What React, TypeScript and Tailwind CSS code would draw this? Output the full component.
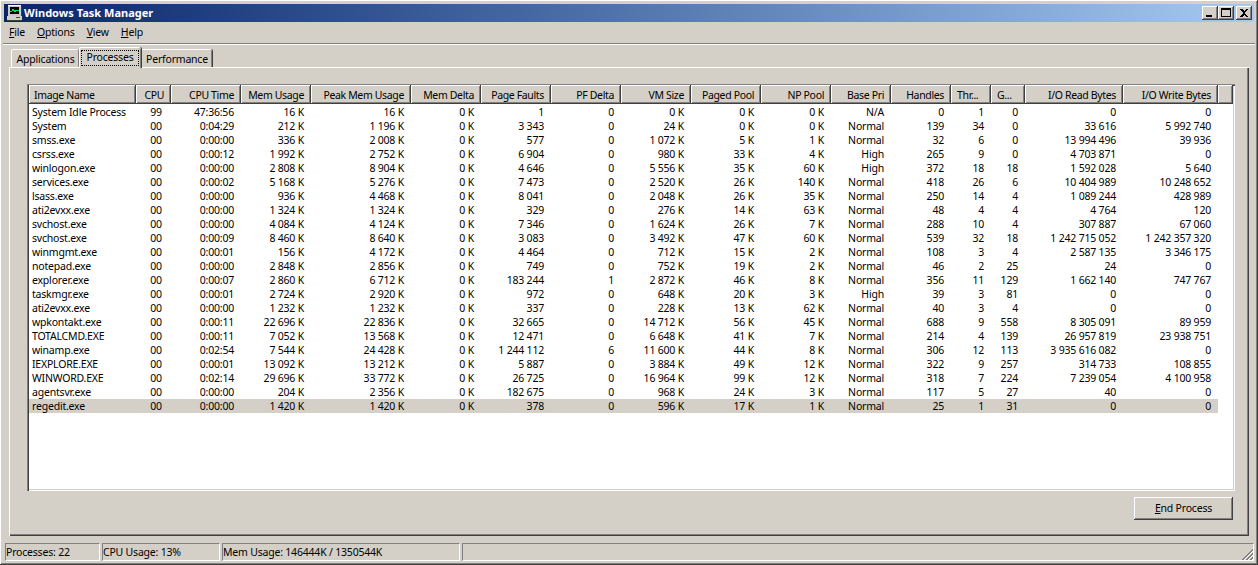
import React from "react";

const raw = `System Idle Process|99|47:36:56|16 K|16 K|0 K|1|0|0 K|0 K|0 K|N/A|0|1|0|0|0
System|00|0:04:29|212 K|1 196 K|0 K|3 343|0|24 K|0 K|0 K|Normal|139|34|0|33 616|5 992 740
smss.exe|00|0:00:00|336 K|2 008 K|0 K|577|0|1 072 K|5 K|1 K|Normal|32|6|0|13 994 496|39 936
csrss.exe|00|0:00:12|1 992 K|2 752 K|0 K|6 904|0|980 K|33 K|4 K|High|265|9|0|4 703 871|0
winlogon.exe|00|0:00:00|2 808 K|8 904 K|0 K|4 646|0|5 556 K|35 K|60 K|High|372|18|18|1 592 028|5 640
services.exe|00|0:00:02|5 168 K|5 276 K|0 K|7 473|0|2 520 K|26 K|140 K|Normal|418|26|6|10 404 989|10 248 652
lsass.exe|00|0:00:00|936 K|4 468 K|0 K|8 041|0|2 048 K|26 K|35 K|Normal|250|14|4|1 089 244|428 989
ati2evxx.exe|00|0:00:00|1 324 K|1 324 K|0 K|329|0|276 K|14 K|63 K|Normal|48|4|4|4 764|120
svchost.exe|00|0:00:00|4 084 K|4 124 K|0 K|7 346|0|1 624 K|26 K|7 K|Normal|288|10|4|307 887|67 060
svchost.exe|00|0:00:09|8 460 K|8 640 K|0 K|3 083|0|3 492 K|47 K|60 K|Normal|539|32|18|1 242 715 052|1 242 357 320
winmgmt.exe|00|0:00:01|156 K|4 172 K|0 K|4 464|0|712 K|15 K|2 K|Normal|108|3|4|2 587 135|3 346 175
notepad.exe|00|0:00:00|2 848 K|2 856 K|0 K|749|0|752 K|19 K|2 K|Normal|46|2|25|24|0
explorer.exe|00|0:00:07|2 860 K|6 712 K|0 K|183 244|1|2 872 K|46 K|8 K|Normal|356|11|129|1 662 140|747 767
taskmgr.exe|00|0:00:01|2 724 K|2 920 K|0 K|972|0|648 K|20 K|3 K|High|39|3|81|0|0
ati2evxx.exe|00|0:00:00|1 232 K|1 232 K|0 K|337|0|228 K|13 K|62 K|Normal|40|3|4|0|0
wpkontakt.exe|00|0:00:11|22 696 K|22 836 K|0 K|32 665|0|14 712 K|56 K|45 K|Normal|688|9|558|8 305 091|89 959
TOTALCMD.EXE|00|0:00:11|7 052 K|13 568 K|0 K|12 471|0|6 648 K|41 K|7 K|Normal|214|4|139|26 957 819|23 938 751
winamp.exe|00|0:02:54|7 544 K|24 428 K|0 K|1 244 112|6|11 600 K|44 K|8 K|Normal|306|12|113|3 935 616 082|0
IEXPLORE.EXE|00|0:00:01|13 092 K|13 212 K|0 K|5 887|0|3 884 K|49 K|12 K|Normal|322|9|257|314 733|108 855
WINWORD.EXE|00|0:02:14|29 696 K|33 772 K|0 K|26 725|0|16 964 K|99 K|12 K|Normal|318|7|224|7 239 054|4 100 958
agentsvr.exe|00|0:00:00|204 K|2 356 K|0 K|182 675|0|968 K|24 K|3 K|Normal|117|5|27|40|0
regedit.exe|00|0:00:00|1 420 K|1 420 K|0 K|378|0|596 K|17 K|1 K|Normal|25|1|31|0|0`;

const rows = raw.split("\n").map((l) => l.split("|"));

const cols: [string, number][] = [
  ["Image Name", 107],
  ["CPU", 35],
  ["CPU Time", 70],
  ["Mem Usage", 70],
  ["Peak Mem Usage", 100],
  ["Mem Delta", 70],
  ["Page Faults", 70],
  ["PF Delta", 70],
  ["VM Size", 70],
  ["Paged Pool", 70],
  ["NP Pool", 70],
  ["Base Pri", 60],
  ["Handles", 60],
  ["Thr...", 40],
  ["G...", 34],
  ["I/O Read Bytes", 98],
  ["I/O Write Bytes", 95],
];

const raised =
  "shadow-[inset_-1px_-1px_0_#404040,inset_1px_1px_0_#ffffff,inset_-2px_-2px_0_#808080]";

function Underlined({ c, rest }: { c: string; rest: string }) {
  return (
    <span>
      <span className="underline">{c}</span>
      {rest}
    </span>
  );
}

function CaptionButton({ children, className }: { children: React.ReactNode; className?: string }) {
  return (
    <div className={`flex h-[14px] w-[16px] items-center justify-center bg-[#d4d0c8] ${raised} ${className ?? ""}`}>
      <svg width="16" height="14" viewBox="0 0 16 14" shapeRendering="crispEdges">
        {children}
      </svg>
    </div>
  );
}

function Tab({ label, active, width }: { label: string; active?: boolean; width: string }) {
  if (active) {
    return (
      <div className={`relative z-10 -mb-px flex h-[21px] items-start rounded-t-[2px] border-t border-l border-white bg-[#d4d0c8] shadow-[inset_-1px_0_0_#808080,1px_0_0_#404040] pt-[2px] pl-[1px] ${width}`}>
        <div className="flex h-[16px] w-[58px] items-center justify-center border border-dotted border-black pb-[2px] leading-none">
          {label}
        </div>
      </div>
    );
  }
  return (
    <div className={`mt-[2px] flex h-[18px] items-center justify-center rounded-t-[2px] border-t border-l border-white bg-[#d4d0c8] pt-[1px] leading-none shadow-[inset_-1px_0_0_#808080,1px_0_0_#404040] ${width}`}>
      {label}
    </div>
  );
}

export default function App() {
  return (
    <div className="flex h-[565px] w-[1258px] flex-col overflow-hidden bg-[#d4d0c8] p-[4px] font-['DejaVu_Sans','Liberation_Sans',sans-serif] text-[10.5px] tracking-[-0.2px] text-black shadow-[inset_-1px_-1px_0_#404040,inset_1px_1px_0_#ffffff,inset_-2px_-2px_0_#808080]">
      {/* title bar */}
      <div className="flex h-[18px] shrink-0 items-center bg-gradient-to-r from-[#0a246a] to-[#a6caf0] pr-[2px] pl-[3px]">
        <svg width="16" height="16" viewBox="0 0 16 16" shapeRendering="crispEdges" className="shrink-0">
          <rect x="1" y="0" width="13" height="11" fill="#c8c8c8" />
          <rect x="1" y="0" width="13" height="1" fill="#fff" />
          <rect x="3" y="2" width="9" height="7" fill="#000" />
          <path d="M3 6h2l1-2 2 3 1-2h3" stroke="#00e060" fill="none" />
          <rect x="0" y="11" width="15" height="4" fill="#d4d0c8" />
          <rect x="0" y="15" width="15" height="1" fill="#404040" />
          <rect x="14" y="1" width="1" height="10" fill="#404040" />
          <rect x="9" y="12" width="4" height="1" fill="#404040" />
        </svg>
        <span className="ml-px text-[11px] font-bold tracking-[0.02px] text-white">Windows Task Manager</span>
        <div className="ml-auto flex items-center">
          <CaptionButton>
            <rect x="4" y="9" width="6" height="2" fill="#000" />
          </CaptionButton>
          <CaptionButton className="mr-[2px]">
            <path d="M3.5 3.5h9v7h-9z M3 2.5h10" stroke="#000" fill="none" />
            <rect x="3" y="2" width="10" height="2" fill="#000" />
          </CaptionButton>
          <CaptionButton>
            <path d="M4 3l2 0 2 2 2-2 2 0-3 4 3 4-2 0-2-2-2 2-2 0 3-4z" fill="#000" />
          </CaptionButton>
        </div>
      </div>

      {/* menu */}
      <div className="flex h-[21px] shrink-0 items-center gap-[12px] pl-[5px]">
        <Underlined c="F" rest="ile" />
        <Underlined c="O" rest="ptions" />
        <Underlined c="V" rest="iew" />
        <Underlined c="H" rest="elp" />
      </div>
      <div className="-mx-px h-[2px] shrink-0 border-t border-b border-t-[#808080] border-b-white" />

      {/* tabs */}
      <div className="mt-[2px] flex shrink-0 pl-[7px]">
        <Tab label="Applications" width="w-[68px]" />
        <Tab label="Processes" active width="w-[62px]" />
        <Tab label="Performance" width="w-[71px]" />
      </div>

      {/* panel */}
      <div className="ml-[5px] mr-[5px] flex h-[469px] shrink-0 flex-col border-t border-l border-white pt-[16px] pr-[14px] pl-[17px] shadow-[inset_-1px_-1px_0_#404040,inset_-2px_-2px_0_#808080]">
        <div className="flex h-[407px] flex-col overflow-hidden bg-white pt-px pl-[1px] shadow-[inset_1px_1px_0_#808080,inset_2px_2px_0_#404040,inset_-1px_-1px_0_#ffffff,inset_-2px_-2px_0_#d4d0c8]">
          <div className="ml-[1px] mr-[2px] flex h-[19px] shrink-0 bg-[#d4d0c8] leading-none tracking-[-0.35px]">
            {cols.map(([name, w], i) => (
              <div
                key={name}
                style={{ width: w }}
                className={`flex h-[19px] shrink-0 items-center pt-[1px] pr-[7px] ${raised} ${
                  i === 0 ? "justify-start pl-[5px]" : i === 13 || i === 14 ? "justify-start pl-[6px]" : "justify-end"
                }`}
              >
                {name}
              </div>
            ))}
            <div className={`flex-1 ${raised}`} />
          </div>
          <div className="mt-[1px] ml-[1px]">
            {rows.map((r, ri) => (
              <div key={ri} className={`flex h-[14px] w-[1189px] items-center leading-none ${ri === rows.length - 1 ? "bg-[#d4d0c8]" : ""}`}>
                {r.map((c, i) => (
                  <div
                    key={i}
                    style={{ width: cols[i][1] }}
                    className={`shrink-0 whitespace-nowrap ${
                      i === 0 ? "pl-[3px] text-left" : i === 1 ? "pl-[5px] text-center" : "pr-[7px] text-right"
                    }`}
                  >
                    {c}
                  </div>
                ))}
              </div>
            ))}
          </div>
        </div>
        <div className="mt-[6px] flex justify-end pr-[2px]">
          <div className={`flex h-[23px] w-[99px] items-center justify-center bg-[#d4d0c8] ${raised}`}>
            <Underlined c="E" rest="nd Process" />
          </div>
        </div>
      </div>

      {/* status bar */}
      <div className="mt-[7px] flex h-[18px] shrink-0 gap-[2px] pl-[1px] leading-none">
        {[
          ["Processes: 22", "w-[95px]"],
          ["CPU Usage: 13%", "w-[118px]"],
          ["Mem Usage: 146444K / 1350544K", "w-[238px]"],
        ].map(([t, w]) => (
          <div key={t} className={`flex items-center border border-t-[#808080] border-r-white border-b-white border-l-[#808080] ${w}`}>
            {t}
          </div>
        ))}
        <div className="relative flex-1 border border-t-[#808080] border-r-white border-b-white border-l-[#808080]">
          <svg width="13" height="13" viewBox="0 0 13 13" shapeRendering="crispEdges" className="absolute -right-px -bottom-px">
            <path d="M12 1 1 12M12 2 2 12M12 5 5 12M12 6 6 12M12 9 9 12M12 10 10 12" stroke="#808080" shapeRendering="auto" fill="none" />
            <path d="M12 3 3 12M12 7 7 12M12 11 11 12" stroke="#ffffff" shapeRendering="auto" fill="none" />
          </svg>
        </div>
      </div>
    </div>
  );
}
